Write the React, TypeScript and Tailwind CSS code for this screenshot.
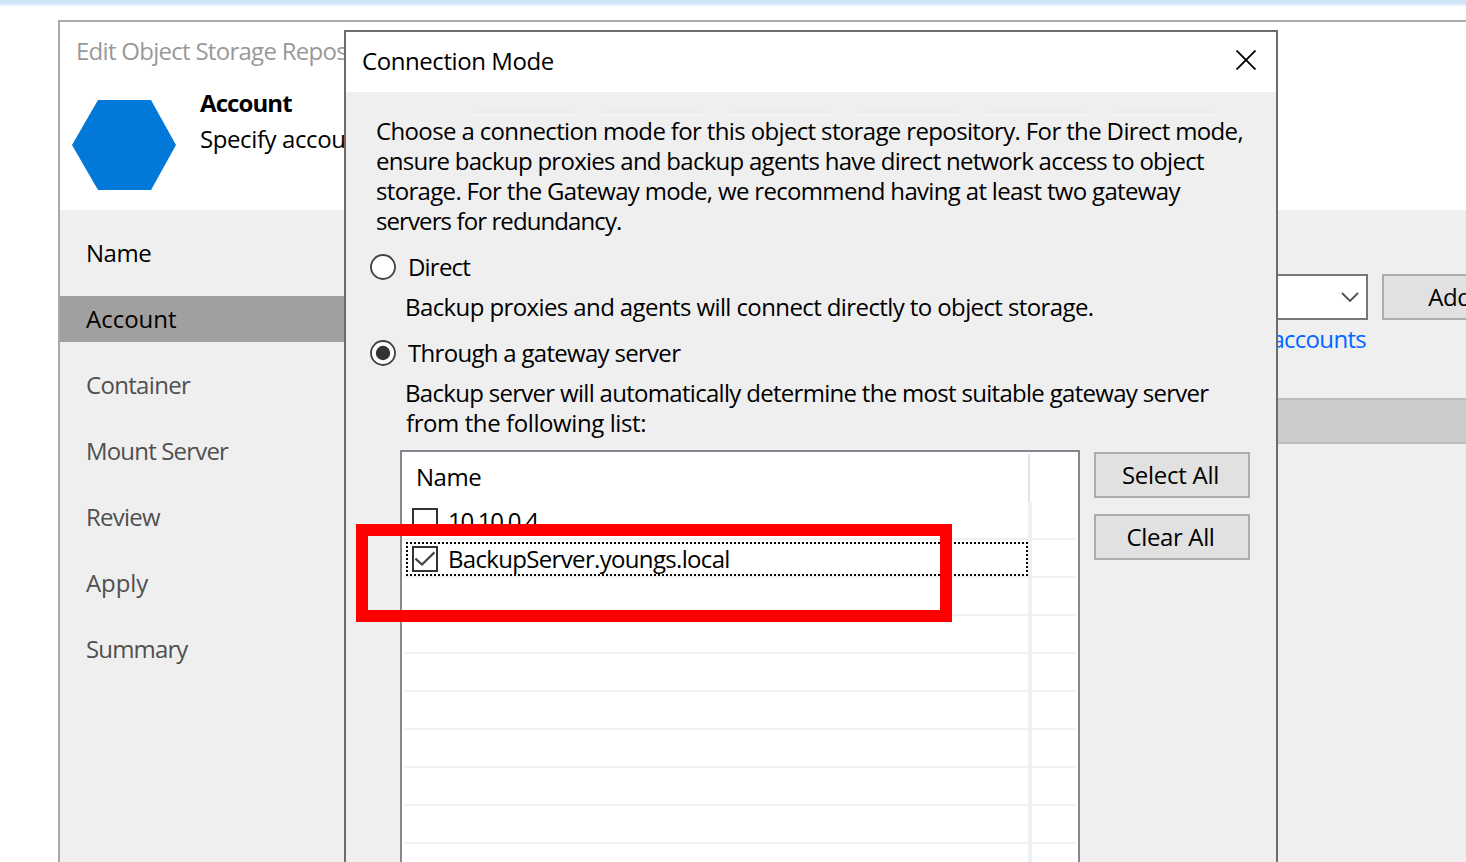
import type { ReactNode } from "react";

const steps = [
  { label: "Name", style: "text-black tracking-[-0.5px]" },
  { label: "Account", style: "bg-[#a0a0a0] text-black tracking-[0px]" },
  { label: "Container", style: "text-[#505050] tracking-[-0.68px]" },
  { label: "Mount Server", style: "text-[#505050] tracking-[-0.83px]" },
  { label: "Review", style: "text-[#505050] tracking-[-0.75px]" },
  { label: "Apply", style: "text-[#505050] tracking-[-0.1px]" },
  { label: "Summary", style: "text-[#505050] tracking-[-0.85px]" },
];

const emptyRows = Array.from({ length: 9 }, (_, i) => i);

function Radio({ checked = false }: { checked?: boolean }) {
  return (
    <svg width="26" height="26" viewBox="0 0 26 26" className="shrink-0">
      <circle cx="13" cy="13" r="12" fill="#fff" stroke="#404040" strokeWidth="1.8" />
      {checked && <circle cx="13" cy="13" r="7.2" fill="#333" />}
    </svg>
  );
}

function Checkbox({ checked = false }: { checked?: boolean }) {
  return (
    <svg width="26" height="26" viewBox="0 0 26 26" className="shrink-0">
      <rect x="1" y="1" width="24" height="24" fill="#fff" stroke="#333" strokeWidth="2" />
      {checked && <path d="M3.4 12.6 10 18.6 22.4 6.4" fill="none" stroke="#444" strokeWidth="2.2" />}
    </svg>
  );
}

function Button({ children, className }: { children: ReactNode; className: string }) {
  return (
    <button
      className={`flex h-[46px] w-[156px] shrink-0 items-center justify-center border-2 border-[#adadad] bg-[#e1e1e1] pr-[3px] ${className}`}
    >
      {children}
    </button>
  );
}

function Row({ children }: { children?: ReactNode }) {
  return (
    <div className="flex h-[38px] shrink-0 pl-[2px] pr-[2px]">
      <div className="w-[624px] border-b-2 border-[#f0f0f0]">{children}</div>
      <div className="w-[2px] bg-[#e9f2fd]" />
      <div className="w-[2px] bg-[#f0f0f0]" />
      <div className="flex-1 border-b-2 border-[#f0f0f0]" />
    </div>
  );
}

function Wizard() {
  return (
    <div className="ml-[58px] mt-[14px] flex h-[842px] flex-col border-l-2 border-t-2 border-[#aaa] bg-white">
      <header className="h-[188px] w-[285px] shrink-0 overflow-hidden whitespace-nowrap">
        <div className="pl-4 pt-[14px] leading-[30px] tracking-[-0.72px] text-[#999]">
          Edit Object Storage Repos
        </div>
        <div className="flex pl-3">
          <svg width="104" height="90" viewBox="0 0 104 90" className="mt-[34px] shrink-0">
            <path d="M26 0H79L104 45 79 90H26L0 45Z" fill="#0279d8" />
          </svg>
          <div className="ml-6 mt-[19px]">
            <div className="font-bold leading-[36px] tracking-[-0.9px]">Account</div>
            <div className="leading-[36px] tracking-[-0.4px]">Specify accou</div>
          </div>
        </div>
      </header>
      <div className="flex flex-1 bg-[#efefef]">
        <nav className="flex w-[316px] shrink-0 flex-col gap-5 pt-5">
          {steps.map((s) => (
            <div key={s.label} className={`flex h-[46px] shrink-0 items-center pl-[26px] ${s.style}`}>
              {s.label}
            </div>
          ))}
        </nav>
        <main className="flex-1 pt-[64px]">
          <div className="flex justify-between">
            <div className="flex h-[46px] w-[992px] items-center justify-end border-2 border-[#777] bg-white pr-[7px]">
              <svg width="18" height="12" viewBox="0 0 18 12">
                <path d="M1 2 9 10 17 2" fill="none" stroke="#505050" strokeWidth="1.8" />
              </svg>
            </div>
            <Button className="-mr-[72px] tracking-[-0.5px]">Add...</Button>
          </div>
          <div className="w-[990px] pt-[4px] text-right leading-[30px] tracking-[-0.7px] text-[#0068ff]">
            accounts
          </div>
          <div className="mt-[44px] h-[46px] border-y-2 border-[#bcbcbc] bg-[#cbcbcb]" />
        </main>
      </div>
    </div>
  );
}

function Dialog() {
  return (
    <div className="absolute left-[344px] top-[30px] flex h-[860px] w-[934px] flex-col border-2 border-[#6c6c6c] bg-[#efefef]">
      <div className="flex h-[60px] shrink-0 items-center justify-between bg-white pb-[2px] pl-4 pr-5">
        <span className="tracking-[-0.42px]">Connection Mode</span>
        <svg width="20" height="20" viewBox="0 0 20 20" className="-mt-[2px]">
          <path d="M0.5 0.5 19.5 19.5M19.5 0.5 0.5 19.5" stroke="#000" strokeWidth="1.8" />
        </svg>
      </div>
      <div className="flex h-[24px] shrink-0 gap-7 pl-[128px] pt-[16px]">
        {[0, 1, 2, 3, 4, 5].map((i) => (
          <div key={i} className="h-2 w-[100px] border-b-2 border-[#f3f3f3] bg-[#ededed]" />
        ))}
      </div>
      <div className="whitespace-nowrap pl-[30px] leading-[30px]">
        <div className="tracking-[-0.64px]">
          Choose a connection mode for this object storage repository. For the Direct mode,
        </div>
        <div className="tracking-[-0.73px]">
          ensure backup proxies and backup agents have direct network access to object
        </div>
        <div className="tracking-[-0.67px]">storage. For the Gateway mode, we recommend having at least two gateway</div>
        <div className="tracking-[-0.9px]">servers for redundancy.</div>
      </div>
      <label className="mt-4 flex h-[30px] items-center gap-3 pl-6 tracking-[-0.8px]">
        <Radio />
        Direct
      </label>
      <div className="whitespace-nowrap pl-[59px] pt-[10px] leading-[30px] tracking-[-0.6px]">
        Backup proxies and agents will connect directly to object storage.
      </div>
      <label className="mt-4 flex h-[30px] items-center gap-3 pl-6 tracking-[-0.7px]">
        <Radio checked />
        Through a gateway server
      </label>
      <div className="whitespace-nowrap pl-[59px] pt-[10px] leading-[30px]">
        <div className="tracking-[-0.7px]">
          Backup server will automatically determine the most suitable gateway server
        </div>
        <div className="pl-px tracking-[-0.41px]">from the following list:</div>
      </div>
      <div className="mt-3 flex gap-[14px] pl-[54px]">
        <div className="flex h-[440px] w-[680px] flex-col border-2 border-[#828790] bg-white">
          <div className="flex h-[50px] shrink-0">
            <div className="flex w-[626px] items-center pl-[14px] tracking-[-0.5px]">Name</div>
            <div className="mt-[2px] w-[2px] bg-[#e5e5e5]" />
          </div>
          <Row>
            <div className="flex h-[38px] items-center gap-[10px] pl-2 tracking-[-1.3px]">
              <Checkbox />
              10.10.0.4
            </div>
          </Row>
          <Row>
            <div className="relative flex h-[38px] items-center gap-[10px] pl-2 tracking-[-0.67px]">
              <Checkbox checked />
              BackupServer.youngs.local
              <svg width="622" height="34" className="absolute left-[2px] top-[2px]" shapeRendering="crispEdges">
                <path
                  d="M0 1H622M0 33H622M1 0V34M621 0V34"
                  fill="none"
                  stroke="#000"
                  strokeWidth="2"
                  strokeDasharray="2 2"
                />
              </svg>
            </div>
          </Row>
          {emptyRows.map((i) => (
            <Row key={i} />
          ))}
        </div>
        <div className="flex flex-col gap-4 pt-[2px]">
          <Button className="tracking-[-0.25px]">Select All</Button>
          <Button className="tracking-[-0.35px]">Clear All</Button>
        </div>
      </div>
    </div>
  );
}

export default function App() {
  return (
    <div className="relative h-[862px] w-[1466px] overflow-hidden bg-white font-['Open_Sans','Noto_Sans',sans-serif] text-[24px] leading-[30px] text-black">
      <div className="h-[6px] border-b-2 border-[#e6f1fc] bg-[#d1e5f8]" />
      <Wizard />
      <Dialog />
      <div className="absolute left-[356px] top-[524px] h-[98px] w-[596px] border-[12px] border-[#ff0000]" />
    </div>
  );
}
